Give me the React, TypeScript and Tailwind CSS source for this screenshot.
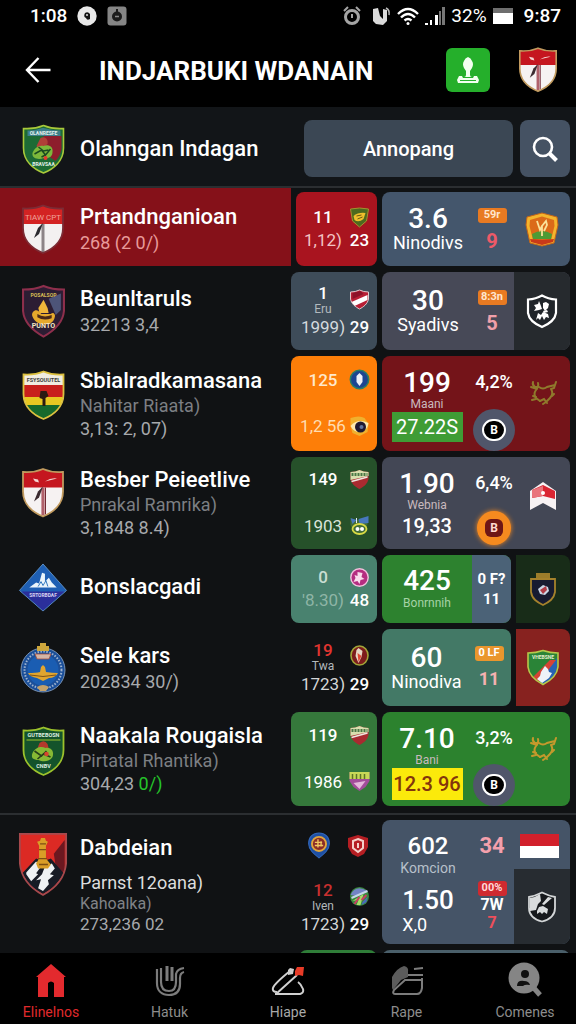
import type { ReactNode } from "react";

const SHIELD = "M22 1.5C16 4 9 5 2 4.5V24C2 37 12 45 22 49C32 45 42 37 42 24V4.5C35 5 28 4 22 1.5Z";

type IconProps = { className?: string };

/* ---------- club crests ---------- */

function CrestGreen({ className = "" }: IconProps) {
  return (
    <svg viewBox="0 0 44 50" className={className} aria-hidden="true">
      <path d={SHIELD} fill="#1d6b35" stroke="#a9c93a" strokeWidth="1.6" />
      <path d="M22 12L40 12V25C39 30 37 34 34 37L24 30Z" fill="#8d1d2c" />
      <path d="M6 6.500C16 6.500 18 4 22 4C27 5 32 6.500 39 6.500V12H6Z" fill="#3d7f8a" />
      <text x="22" y="10.500" fontSize="5" fontWeight="700" textAnchor="middle" fill="#e6f2ee">OLANRESFE</text>
      <path d="M19 14c4-2 8 1 7 6l-8 6-3-4z" fill="#b04038" />
      <path d="M11 29c2-5 6-8 11-7 5-2 10 1 9 6 0 5-4 7-9 6-4 2-12 1-11-5z" fill="#7db83b" />
      <path d="M13 30l7-4 4 5 5-6M17 23l5 4 5-1M20 33l4-2" stroke="#1a4a20" strokeWidth="1.500" fill="none" />
      <circle cx="24" cy="34" r="2" fill="#e23b2d" />
      <text x="22" y="42" fontSize="5" fontWeight="700" textAnchor="middle" fill="#e6f2ee">BRAVSAA</text>
    </svg>
  );
}

function CrestFrog({ className = "" }: IconProps) {
  return (
    <svg viewBox="0 0 44 50" className={className} aria-hidden="true">
      <path d={SHIELD} fill="#14532b" stroke="#9cc22c" strokeWidth="1.800" />
      <text x="22" y="11" fontSize="5.500" fontWeight="700" textAnchor="middle" fill="#dfeee0">GUTBEBOSN</text>
      <path d="M5 14H39" stroke="#9cc22c" strokeWidth="1" />
      <path d="M18 17q5-4 8 1l2 7H15z" fill="#b5392c" />
      <path d="M11 27c3-6 9-7 13-5 6-1 9 4 7 9-3 5-10 5-14 3-5 0-8-2-6-7z" fill="#86b934" />
      <path d="M13 25l7 5 5-5M16 33l6-5 7 3" stroke="#27401a" strokeWidth="1.600" fill="none" />
      <circle cx="25" cy="28" r="2.300" fill="#d5452e" />
      <text x="22" y="42" fontSize="5.500" fontWeight="700" textAnchor="middle" fill="#dfeee0">CNBV</text>
    </svg>
  );
}

function CrestRedWhite({ className = "" }: IconProps) {
  return (
    <svg viewBox="0 0 44 50" className={className} aria-hidden="true">
      <path d={SHIELD} fill="#f6f2f2" />
      <path d="M22 1.500C16 4 9 5 2 4.500V20H42V4.500C35 5 28 4 22 1.500Z" fill="#c5161f" />
      <path d="M22 20V48" stroke="#b0606a" strokeWidth="3.200" />
      <path d="M24.500 20V47" stroke="#712733" strokeWidth="1" />
      <path d="M22 19L17 24L13 34L18 30Z" fill="#3b2b30" />
      <path d="M12 11l5 1 1 3-4-1zM24 14q6-4 12-3l-8 2z" fill="#f5d5d2" />
      <path d={SHIELD} fill="none" stroke="#c19a5e" strokeWidth="1.800" />
    </svg>
  );
}

function CrestRedWhiteText({ className = "" }: IconProps) {
  return (
    <svg viewBox="0 0 44 50" className={className} aria-hidden="true">
      <path d={SHIELD} fill="#f3f1f1" />
      <path d="M22 1.500C16 4 9 5 2 4.500V20H42V4.500C35 5 28 4 22 1.500Z" fill="#d32323" />
      <text x="22" y="15.500" fontSize="8" textAnchor="middle" fill="#f0a29a">TIAW CPT</text>
      <path d="M22 20V48" stroke="#8c8487" strokeWidth="3" />
      <path d="M22 19L17 24L13 34L18 30Z" fill="#2b2b30" />
      <path d={SHIELD} fill="none" stroke="#7c2c35" strokeWidth="1.800" />
    </svg>
  );
}

function CrestPurple({ className = "" }: IconProps) {
  return (
    <svg viewBox="0 0 44 52" className={className} aria-hidden="true">
      <path d="M22 1.500C16 4 9 5 2 5V26C3 38 13 46 22 51C31 46 41 38 42 26V5C35 5 28 4 22 1.500Z" fill="#2c1d33" stroke="#8e2f4c" strokeWidth="2" />
      <path d="M27 14L39 9V25L34 30Z" fill="#4d5478" />
      <text x="22" y="12" fontSize="5" fontWeight="700" textAnchor="middle" fill="#d7bd55">POSALSOP</text>
      <path d="M22 15l4 8 1 5H18l-1-5z" fill="#efb63a" />
      <path d="M11 31c-1-4 3-7 6-5l3 3h9c3-3 5 1 4 3-1 5-5 7-10 7s-10-2-12-8z" fill="#e5a92c" />
      <path d="M16 29q6 4 14 1v3q-8 3-14-1z" fill="#4a2a18" />
      <text x="22" y="43" fontSize="7" fontWeight="700" textAnchor="middle" fill="#f4e5c4">PUNTO</text>
    </svg>
  );
}

function CrestTricolor({ className = "" }: IconProps) {
  return (
    <svg viewBox="0 0 44 50" className={className} aria-hidden="true">
      <path d={SHIELD} fill="#f0ece0" />
      <path d="M2 15H42V28H2.500Z" fill="#c81f1c" />
      <path d="M2.500 27H41.500L39 35H5Z" fill="#e8c822" />
      <path d="M5 35H39C35 42 29 46 22 49C15 46 9 42 5 35Z" fill="#17692c" />
      <path d="M19 21h6l2 5-3 2v8h-3v-7l-3-1z" fill="#2a1a12" />
      <text x="22" y="12" fontSize="5.500" fontWeight="700" textAnchor="middle" fill="#3c3c3c">FSYSOUUTEL</text>
      <path d={SHIELD} fill="none" stroke="#dcc03e" strokeWidth="1.800" />
    </svg>
  );
}

function CrestDiamond({ className = "" }: IconProps) {
  return (
    <svg viewBox="0 0 50 50" className={className} aria-hidden="true">
      <path d="M25 1L49 28L25 49L1 28Z" fill="#1e5fb4" stroke="#5d8fc4" strokeWidth="1" />
      <path d="M3 29H47L25 48.500Z" fill="#2b2f9b" />
      <path d="M11 25l7-5 3 1 3-11 3 1v8l4-4 3 5 5 5z" fill="#eaf4fb" />
      <path d="M20 24l3-5 2 4 3-5 2 6" stroke="#2e76bd" fill="none" strokeWidth="1" />
      <text x="25" y="34.500" fontSize="5" fontWeight="700" textAnchor="middle" fill="#d8d5f3">SRTORBDAF</text>
    </svg>
  );
}

function CrestRound({ className = "" }: IconProps) {
  return (
    <svg viewBox="0 0 46 52" className={className} aria-hidden="true">
      <circle cx="23" cy="28" r="22" fill="#1b4f99" stroke="#7892b4" strokeWidth="1" />
      <circle cx="23" cy="28" r="18.500" fill="none" stroke="#9fb3cf" strokeWidth="2" strokeDasharray="1.500 1.500" />
      <circle cx="23" cy="28" r="15.500" fill="#1a5db2" />
      <path d="M20 1h6v3h3v5H17V4h3z" fill="#cda63c" />
      <path d="M15 12h16l-2 5H17z" fill="#d4b5a6" stroke="#a34e3c" strokeWidth="0.800" />
      <path d="M8 31q8 0 12-1l1-5 2-2 2 2 1 5q6 1 12 1-3 5-9 5l-6 3-6-3q-7-1-9-5z" fill="#e0a52f" />
      <path d="M10 33q13 3 26 0" stroke="#7d5319" fill="none" />
      <path d="M17 45q6-4 12 0l-3 4h-6z" fill="#c5a26a" />
    </svg>
  );
}

function CrestMountain({ className = "" }: IconProps) {
  return (
    <svg viewBox="0 0 50 66" className={className} aria-hidden="true">
      <path d="M1.500 2H48.500V32C47 48 36 58 25 64C14 58 3 48 1.500 32Z" fill="#dc2a24" />
      <path d="M36 22L47 8V38L40 50Z" fill="#6b1820" />
      <path d="M4 42L18 27L25 30L33 27L46 42C40 53 33 59 25 63C17 59 9 53 4 42Z" fill="#171b25" />
      <path d="M8 41l10-11 5 5-5 7 2 1-7 7-5-7zM27 35l7-3 3 5-5 6 4 1-6 5 1 4-6 7-5-3 3-9-5 1 6-6z" fill="#eef1f3" />
      <path d="M22 9l1-3h4l1 3 2 1-2 4v13l5 6-3 4H20l-2-5 3-5V14l-2-4z" fill="#d99d27" />
      <path d="M21 18h7M20 27h9M22 12h6M21 33h9" stroke="#7d4e13" strokeWidth="1.300" />
      <path d="M1.500 2H48.500V32C47 48 36 58 25 64C14 58 3 48 1.500 32Z" fill="none" stroke="#a6494d" strokeWidth="1.800" />
    </svg>
  );
}

function CrestOrange({ className = "" }: IconProps) {
  return (
    <svg viewBox="0 0 34 35" className={className} aria-hidden="true">
      <path d="M17 1L32 5L33 13L29 31L17 34L5 31L1 13L2 5Z" fill="#f4b52d" stroke="#c56518" strokeWidth="1" />
      <path d="M17 4.500L29 8L29.500 14L26 28H8L4.500 14L5 8Z" fill="#db6a19" />
      <path d="M7 22q10-6 20 0l-1 5H8z" fill="#4c9b35" />
      <path d="M12 9l3 9 2-4v10M17 14l4-5 1 4-3 6" stroke="#fae29a" strokeWidth="1.800" fill="none" />
      <path d="M5 27l12 1 12-1-1 3-11 3-11-3z" fill="#c83919" />
    </svg>
  );
}

function CrestOutline({ className = "" }: IconProps) {
  return (
    <svg viewBox="0 0 32 36" className={className} aria-hidden="true">
      <path d="M16 2.500Q10 6 2 6.500V20C3 27 9 31 16 34C23 31 29 27 30 20V6.500Q22 6 16 2.500Z" fill="#20252a" stroke="#fff" strokeWidth="2.200" />
      <path d="M8 12l4-1 1-3 2 5 1 3-3 1-5 1 2-3zM17 10l3-1 3 2-1 4-3 3-2-3z" fill="#fff" />
      <path d="M10 27l2-7 3 2 2-3 5 2 1 4-3-1-2 3-2-4-2 4-2-2z" fill="#fff" />
      <path d="M17 18l4-1 1 2-4 1z" fill="#fff" />
    </svg>
  );
}

function CrestDragon({ className = "" }: IconProps) {
  return (
    <svg viewBox="0 0 28 26" className={className} fill="none" stroke="currentColor" strokeWidth="2" strokeLinecap="round" aria-hidden="true">
      <path d="M4 2q-1 3 2 5h3M2 7l6 2M9 3q1 3-2 7-3 4 0 8l4 3" />
      <path d="M10 7q4 3 8 0l8-2M27 2l-2 6-3 1M22 9q3 5-1 9l-4 4M4 16l3 1M3 20l4-1M11 21l4-2 3 4M14 24l3-2M23 16l2-2" />
    </svg>
  );
}

function CrestArrow({ className = "" }: IconProps) {
  return (
    <svg viewBox="0 0 28 30" className={className} aria-hidden="true">
      <path d="M14 1L27 10V29L14 22L1 29V10Z" fill="#f7f2f3" />
      <path d="M3 9L14 4L26 10V18L14 15L3 17Z" fill="#da2532" />
      <path d="M3 9L14 5V15L3 17Z" fill="#e9747b" />
      <circle cx="14" cy="12" r="2" fill="#fff" />
    </svg>
  );
}

function CrestNavy({ className = "" }: IconProps) {
  return (
    <svg viewBox="0 0 28 34" className={className} aria-hidden="true">
      <path d="M7 1h14v7H7z" fill="#9c7d2a" />
      <path d="M2 7H26V20C25 27 20 30 14 33C8 30 3 27 2 20Z" fill="#171b31" stroke="#a5822c" strokeWidth="1.800" />
      <path d="M9 17l5-4 5 2 1 4-4 4-5-1z" fill="#cbd6e6" />
      <path d="M11 18l6-4 1 4-4 4z" fill="#b03c46" />
    </svg>
  );
}

function CrestSplit({ className = "" }: IconProps) {
  return (
    <svg viewBox="0 0 34 37" className={className} aria-hidden="true">
      <path d="M17 1.500Q10 4 2 4V18C3 27 10 32 17 35.500C24 32 31 27 32 18V4Q24 4 17 1.500Z" fill="#2a8437" />
      <path d="M31 9V19C30 27 24 32 17 35L12 31Z" fill="#2763b3" />
      <path d="M24 11H30L13 33L7 28Z" fill="#d64435" />
      <path d="M15 23l4-6 3 3 1 3 3 1-3 5-7 5-5-4 3-3z" fill="#eef3f8" />
      <text x="17" y="9.500" fontSize="5" fontWeight="700" textAnchor="middle" fill="#e3efcf">VHEBSNE</text>
      <path d="M17 1.500Q10 4 2 4V18C3 27 10 32 17 35.500C24 32 31 27 32 18V4Q24 4 17 1.500Z" fill="none" stroke="#b7c84a" strokeWidth="1.600" />
    </svg>
  );
}

function CrestBall({ className = "" }: IconProps) {
  return (
    <svg viewBox="0 0 30 32" className={className} aria-hidden="true">
      <path d="M15 1.500Q8 5 2 6V17C2 25 9 29 15 30.500C21 29 28 25 28 17V6Q22 5 15 1.500Z" fill="#16191c" stroke="#d3d6d7" strokeWidth="1.800" />
      <path d="M3 7q6-1 10-4l1 7-3 3-2 6-6 1zM25 7l-4-1-6 7 2 1z" fill="#d9dcdd" />
      <path d="M10 20l2-4 4-1 5 3-1 5-3-2-2 2-2-2-3 2z" fill="#d9dcdd" />
    </svg>
  );
}

/* ---------- small badges ---------- */

function Mini({ kind }: { kind: string }) {
  const cls = "size-[21px]";
  const half = "M10 1Q6 3 1 3V10C2 15 6 18 10 20C14 18 18 15 19 10V3Q14 3 10 1Z";
  switch (kind) {
    case "olive":
      return (
        <svg viewBox="0 0 20 21" className={cls} aria-hidden="true">
          <path d="M1 2Q10 0 19 2L17 14L10 20L3 14Z" fill="#4d6a1e" stroke="#a3932d" />
          <path d="M4 9q5-4 12-3l-2 6q-5 4-9 1z" fill="#f0c02c" />
          <path d="M7 9l5-1M8 12l5-2" stroke="#6b5a12" />
        </svg>
      );
    case "slash":
      return (
        <svg viewBox="0 0 20 21" className={cls} aria-hidden="true">
          <path d={half} fill="#b81f35" />
          <path d="M2 13L18 6V11L5 17Z" fill="#fff" />
          <path d="M3 4L11 2L14 5L3 10Z" fill="#8c1228" />
          <path d={half} fill="none" stroke="#dfc8cc" />
        </svg>
      );
    case "blue":
      return (
        <svg viewBox="0 0 20 21" className={cls} aria-hidden="true">
          <circle cx="10" cy="10.500" r="9.200" fill="#1d4591" stroke="#2b8064" strokeWidth="1.500" />
          <path d="M10 4l3 3v6l-3 4-3-4V7z" fill="#edf1f7" />
        </svg>
      );
    case "eye":
      return (
        <svg viewBox="0 0 20 21" className={cls} aria-hidden="true">
          <path d="M1 2q9-3 14 0l4 6-1 8-8 4-7-3-2-7z" fill="#f0b12e" />
          <path d="M1 10q7-8 18-3-1 8-9 9-6 0-9-6z" fill="#fbe9b0" />
          <circle cx="11" cy="11" r="5.500" fill="#1e1931" />
          <circle cx="12" cy="11" r="2" fill="#62759c" />
        </svg>
      );
    case "band":
      return (
        <svg viewBox="0 0 20 21" className={cls} aria-hidden="true">
          <path d={half} fill="#a92a30" />
          <path d="M10 1Q6 3 1 3V11L19 7V3Q14 3 10 1Z" fill="#d9dfae" />
          <path d="M2 5.500H18" stroke="#4a7846" strokeWidth="3" strokeDasharray="2 1" />
          <path d="M2 12.500L18 8" stroke="#efe7df" strokeWidth="1.500" />
        </svg>
      );
    case "flags":
      return (
        <svg viewBox="0 0 20 21" className={cls} aria-hidden="true">
          <path d="M1 4l8 1 9-2v6l-3 9-5 2-6-3-3-7z" fill="#426c3a" />
          <path d="M9 4l10-3v7l-9 1zM1 3l6 2-4 4z" fill="#4777bd" />
          <path d="M7 3v5" stroke="#e9eef5" />
          <ellipse cx="10" cy="14" rx="7" ry="5" fill="none" stroke="#d8da45" strokeWidth="1.800" />
          <circle cx="8" cy="14" r="2" fill="#fff" /><circle cx="12.500" cy="14" r="2" fill="#fff" />
        </svg>
      );
    case "pink":
      return (
        <svg viewBox="0 0 20 21" className={cls} aria-hidden="true">
          <circle cx="10" cy="10.500" r="8.700" fill="#b52d80" stroke="#f2c3de" strokeWidth="1.400" />
          <path d="M8 5l5 1-1 4 3 2-4 1-1 4-2-3-4 1 2-4-1-3 3 1z" fill="#f9dceb" />
        </svg>
      );
    case "ring":
      return (
        <svg viewBox="0 0 20 21" className={cls} aria-hidden="true">
          <ellipse cx="10" cy="10.500" rx="8.500" ry="9.500" fill="#7d1c1c" stroke="#a2a438" strokeWidth="1.600" />
          <path d="M9 3l4 3-1 6-3 6-3-7 1-6z" fill="#e8d8c6" />
          <path d="M8 8l4 3-3 6z" fill="#e14630" />
        </svg>
      );
    case "purple":
      return (
        <svg viewBox="0 0 20 21" className={cls} aria-hidden="true">
          <path d="M0 1H20V10L16 16L10 20L4 16L0 10Z" fill="#a34c9b" />
          <path d="M0 1H20V8H0Z" fill="#c8d857" />
          <path d="M3 3v5M7 3v5M11 3v5M15 3v5" stroke="#5e7325" strokeWidth="1.500" />
          <path d="M4 12l12-2-6 8z" fill="#e5b7dc" />
        </svg>
      );
    case "bluedrop":
      return (
        <svg viewBox="0 0 22 26" className="h-[27px] w-6" aria-hidden="true">
          <path d="M11 1C17 1 21 5 21 11C21 17 16 21 11 25C6 21 1 17 1 11C1 5 5 1 11 1Z" fill="#1e4fa3" stroke="#3166b8" />
          <circle cx="11" cy="11.500" r="6.800" fill="#8a2c28" stroke="#e2a53b" strokeWidth="1.800" />
          <path d="M7 10h7M7 13h8M10 7v8M13 9v5" stroke="#f1c860" strokeWidth="1.300" fill="none" />
        </svg>
      );
    case "redring":
      return (
        <svg viewBox="0 0 22 24" className="h-6 w-[22px]" aria-hidden="true">
          <path d="M11 1L21 4V13L17 20L11 23L5 20L1 13V4Z" fill="#b51e23" />
          <path d="M11 5L16 7V14L11 18L6 14V7Z" fill="#b51e23" stroke="#f3d2cb" strokeWidth="2" />
          <path d="M11 9v5" stroke="#f3d2cb" strokeWidth="2" />
        </svg>
      );
    default:
      return (
        <svg viewBox="0 0 20 21" className={cls} aria-hidden="true">
          <circle cx="10" cy="10.500" r="9.500" fill="#39883e" />
          <path d="M1 9Q6-2 18 5L7 10Z" fill="#7384c5" />
          <path d="M2 12L18 5" stroke="#c7d5e9" strokeWidth="2" />
          <path d="M3 15L14 8L11 19L7 19L9 14Z" fill="#a8dc6a" />
          <path d="M5 18L10 11M12 14L17 9" stroke="#cc3d63" strokeWidth="2" />
          <path d="M13 16l5-5-1 5-5 3z" fill="#4969bd" />
        </svg>
      );
  }
}

function Seal() {
  return (
    <span className="flex size-[42px] items-center justify-center rounded-full bg-[#50566a]">
      <span className="flex h-[22px] w-6 items-center justify-center rounded-full border-2 border-white bg-black text-xs font-bold">B</span>
    </span>
  );
}

function Tag({ children, className }: { children: ReactNode; className: string }) {
  return <span className={`flex h-[15px] w-[29px] items-center justify-center rounded-[3px] text-[11px] font-bold ${className}`}>{children}</span>;
}

/* ---------- row parts ---------- */

type ClubProps = { crest: ReactNode; name: string; place?: string; score?: ReactNode; className?: string };

function Club({ crest, name, place, score, className = "" }: ClubProps) {
  return (
    <div className={`flex min-w-0 flex-1 gap-[14px] pl-5 ${className}`}>
      <div className="flex w-[46px] shrink-0 justify-center">{crest}</div>
      <div className="min-w-0 self-center whitespace-nowrap">
        <h2 className="text-[22px] leading-7 font-medium">{name}</h2>
        {place && <p className="text-lg leading-[22px] text-[#7c7f83]">{place}</p>}
        {score && <p className="text-lg leading-6 text-[#a7a9ac]">{score}</p>}
      </div>
    </div>
  );
}

type StatProps = { top: string; note?: string; bottom: string; icon: string; last: ReactNode; className: string; topClass?: string; bottomClass?: string };

function Stat({ top, note, bottom, icon, last, className, topClass = "", bottomClass = "" }: StatProps) {
  return (
    <div className={`grid shrink-0 grid-cols-[48px_21px] content-center items-center justify-end justify-items-center gap-x-[2px] rounded-lg pr-[7px] text-[17px] whitespace-nowrap ${className}`}>
      <span className={`flex flex-col items-center leading-5 font-medium ${topClass}`}>
        {top}
        {note && <small className="text-xs leading-3 font-normal text-[#b3b9bd]">{note}</small>}
      </span>
      <Mini kind={icon} />
      <span className={`leading-6 ${bottomClass}`}>{bottom}</span>
      <span className="leading-6 font-medium">{last}</span>
    </div>
  );
}

type RateProps = { value: string; note: string; total: ReactNode; change: string; seal: ReactNode; mark: ReactNode; className: string };

function Rate({ value, note, total, change, seal, mark, className }: RateProps) {
  return (
    <div className={`flex w-[188px] shrink-0 rounded-lg ${className}`}>
      <div className="flex flex-1 flex-col items-center pt-3">
        <strong className="text-[28px] leading-[30px] font-medium">{value}</strong>
        <small className="text-xs leading-3 text-[#c9b9be]">{note}</small>
        {total}
      </div>
      <div className="flex w-[44px] flex-col items-center justify-between pt-[14px]">
        <span className="text-lg leading-6 font-medium whitespace-nowrap">{change}</span>
        {seal}
      </div>
      <div className="flex w-[54px] justify-center pt-6">{mark}</div>
    </div>
  );
}

function Figure({ value, label, className = "" }: { value: string; label: string; className?: string }) {
  return (
    <div className={`flex flex-1 flex-col items-center justify-center pl-1 whitespace-nowrap ${className}`}>
      <strong className="text-[28px] leading-7 font-medium">{value}</strong>
      <span className="text-lg leading-5">{label}</span>
    </div>
  );
}

function Side({ children, className = "" }: { children: ReactNode; className?: string }) {
  return <div className={`flex w-[44px] flex-col items-center justify-center gap-2 ${className}`}>{children}</div>;
}

const ROW = "flex gap-[5px] pr-[6px]";

/* ---------- navigation ---------- */

function NavItem({ label, icon, className = "" }: { label: string; icon: ReactNode; className?: string }) {
  return (
    <a href="#" className={`flex w-[62px] flex-col items-center gap-1 text-sm leading-5 ${className}`}>
      {icon}
      {label}
    </a>
  );
}

export default function App() {
  return (
    <div className="flex h-screen flex-col overflow-hidden bg-black font-['Roboto',sans-serif] text-white">
      <div className="flex h-8 shrink-0 items-center justify-between pr-[15px] pl-[30px] text-[19px] font-medium">
        <div className="flex items-center gap-[10px]">
          <span>1:08</span>
          <svg viewBox="0 0 20 20" className="size-5" aria-hidden="true">
            <circle cx="10" cy="10" r="9.700" fill="#e8e8e8" />
            <path d="M8 7q3-2 5 1v5q-3 2-4-1-3-1-1-5z" fill="#111" /><circle cx="10" cy="9" r="1" fill="#ddd" />
          </svg>
          <svg viewBox="0 0 20 20" className="size-5" aria-hidden="true">
            <rect x="0.500" y="0.500" width="19" height="19" rx="3" fill="#858585" />
            <circle cx="10" cy="10.500" r="5" fill="#1b1b1b" /><path d="M10 3v4" stroke="#1b1b1b" strokeWidth="2" /><path d="M8 10.500h4" stroke="#888" strokeWidth="1.500" />
          </svg>
        </div>
        <div className="flex items-center gap-[6px]">
          <svg viewBox="0 0 18 20" className="h-5 w-[18px]" fill="none" stroke="#a5a5a5" aria-hidden="true">
            <circle cx="9" cy="11" r="6.500" strokeWidth="3" /><path d="M9 8v4" strokeWidth="2" /><path d="M1 5l4-4M17 5l-4-4" strokeWidth="2" />
          </svg>
          <svg viewBox="0 0 20 20" className="ml-1 size-5" aria-hidden="true">
            <path d="M2 3l5-1 2 8 3 3V3l4 1v11l-4 4-7-1-3-3z" fill="#dadada" /><path d="M15 2q4 2 3 7" stroke="#bbb" strokeWidth="1.500" fill="none" />
          </svg>
          <svg viewBox="0 0 22 20" className="h-5 w-[22px]" fill="none" stroke="#fff" strokeWidth="2.400" aria-hidden="true">
            <path d="M1 8Q11-2 21 8M4 11.500q7-7 14 0M7.500 14.500q3.500-3 7 0" /><circle cx="11" cy="17.500" r="1.500" fill="#fff" stroke="none" />
          </svg>
          <svg viewBox="0 0 20 20" className="size-5" aria-hidden="true">
            <path d="M0 17h3v2H0zM5 14h2v5H5zM10 9h3v10h-3z" fill="#fff" /><path d="M14 5h2v14h-2zM17 1h3v18h-3z" fill="#777" />
          </svg>
          <span className="font-normal">32%</span>
          <svg viewBox="0 0 20 16" className="h-4 w-5" aria-hidden="true">
            <path d="M0 0h20v5H0z" fill="#6e6e6e" /><path d="M0 5h20v11H0z" fill="#fff" />
          </svg>
          <span className="ml-[5px]">9:87</span>
        </div>
      </div>

      <header className="flex h-[75px] shrink-0 items-center pr-[18px] pl-[25px]">
        <button type="button" aria-label="Back" className="flex w-[74px]">
          <svg viewBox="0 0 26 26" className="size-[26px]" fill="none" stroke="#fff" strokeWidth="2.400" aria-hidden="true">
            <path d="M25.500 13H2M13.500 1L2 13L13.500 25" />
          </svg>
        </button>
        <h1 className="flex-1 pt-1 text-[26px] font-bold whitespace-nowrap">INDJARBUKI WDANAIN</h1>
        <button type="button" aria-label="Stamp" className="mr-7 flex size-11 items-center justify-center rounded-md bg-[#25af2b]">
          <svg viewBox="0 0 22 26" className="h-[26px] w-[22px]" fill="#f2fff0" aria-hidden="true">
            <path d="M11 0q3 1 4 4 2 3 0 7l-2 3v4q0 2 2 2H7q2 0 2-2v-4l-2-3Q5 7 7 4q1-3 4-4z" />
            <path d="M2 19h3l1 2h10l1-2h3l2 4-1 3H1l-1-3z" /><path d="M3 23.500h16" stroke="#25af2b" />
          </svg>
        </button>
        <CrestRedWhite className="h-[47px] w-[40px]" />
      </header>

      <main className="min-h-0 flex-1 overflow-hidden bg-[#101214]">
        <section className="flex h-[79px] items-center gap-[7px] bg-[#121518] pt-1 pr-[6px]">
          <Club crest={<CrestGreen className="h-[50px] w-[45px]" />} name="Olahngan Indagan" />
          <button type="button" className="h-[57px] w-[209px] rounded-lg bg-[#3b4754] text-xl font-medium">Annopang</button>
          <button type="button" aria-label="Search" className="flex h-[57px] w-[50px] items-center justify-center rounded-lg bg-[#455263]">
            <svg viewBox="0 0 26 26" className="size-[26px]" fill="none" stroke="#fff" aria-hidden="true">
              <circle cx="11" cy="11" r="9" strokeWidth="2.600" /><path d="M17.500 17.500L24.500 24.500" strokeWidth="4" />
            </svg>
          </button>
        </section>

        <section className="flex flex-col gap-[6px] border-t-2 border-[#2b2e31] pb-[7px]">
          <div className="flex min-h-[78px] gap-[5px] pr-[6px]">
            <Club
              className="items-center bg-[#851119] pt-1"
              crest={<CrestRedWhiteText className="h-[50px] w-[44px]" />}
              name="Prtandnganioan"
              score={<span className="text-[#e89a9a]">268 (2 0/)</span>}
            />
            <Stat className="mt-1 w-[81px] bg-[#a9141f]" top="11" bottom="1,12)" icon="olive" last="23" bottomClass="text-[#f3c4c4]" />
            <div className="mt-1 flex w-[188px] shrink-0 rounded-lg bg-[#44566c]">
              <Figure value="3.6" label="Ninodivs" />
              <Side>
                <Tag className="bg-[#e87a22] text-[#ffe6cf]">59r</Tag>
                <b className="text-xl leading-5 text-[#ee5a68]">9</b>
              </Side>
              <div className="flex w-14 items-center justify-center"><CrestOrange className="h-[35px] w-[34px]" /></div>
            </div>
          </div>

          <div className={`${ROW} min-h-[78px]`}>
            <Club className="items-center" crest={<CrestPurple className="h-[54px] w-[45px]" />} name="Beunltaruls" score="32213 3,4" />
            <Stat className="w-[86px] bg-[#3e4c59]" top="1" note="Eru" bottom="1999)" icon="slash" last="29" bottomClass="text-[#d4dade]" />
            <div className="flex w-[188px] shrink-0 overflow-hidden rounded-lg bg-[#474957]">
              <Figure value="30" label="Syadivs" />
              <Side>
                <Tag className="bg-[#e87a22] text-[#ffe6cf]">8:3n</Tag>
                <b className="text-xl leading-5 text-[#f0a0aa]">5</b>
              </Side>
              <div className="flex w-14 items-center justify-center bg-[#262a2e]"><CrestOutline className="h-9 w-8" /></div>
            </div>
          </div>

          <div className={`${ROW} min-h-[95px]`}>
            <Club crest={<CrestTricolor className="mt-[14px] h-[50px] w-[45px]" />} name="Sbialradkamasana" place="Nahitar Riaata)" score="3,13: 2, 07)" />
            <Stat className="w-[86px] gap-y-6 bg-[#fd7e08]" top="125" bottom="1,2 56" icon="blue" last={<Mini kind="eye" />} topClass="text-[#ffe9cb]" bottomClass="text-[#ffdcb0]" />
            <Rate
              className="bg-[#741419]"
              value="199"
              note="Maani"
              total={<span className="mt-[2px] w-[71px] bg-[#3f9c35] text-center text-xl leading-[30px]">27.22S</span>}
              change="4,2%"
              seal={<Seal />}
              mark={<CrestDragon className="h-[26px] w-[28px] text-[#8f7a2c]" />}
            />
          </div>

          <div className={`${ROW} min-h-[92px]`}>
            <Club crest={<CrestRedWhite className="mt-[10px] h-[51px] w-[44px]" />} name="Besber Peieetlive" place="Pnrakal Ramrika)" score="3,1848 8.4)" />
            <Stat className="w-[86px] gap-y-6 bg-[#26512a]" top="149" bottom="1903" icon="band" last={<Mini kind="flags" />} bottomClass="text-[#d9e4d9]" />
            <Rate
              className="bg-[#434755]"
              value="1.90"
              note="Webnia"
              total={<span className="text-xl leading-[30px] font-medium">19,33</span>}
              change="6,4%"
              seal={
                <span className="mb-1 flex size-[34px] items-center justify-center rounded-full bg-[#f58a1f] shadow-[0_0_5px_#f58a1f]">
                  <span className="flex size-[18px] items-center justify-center rounded-md bg-[#6d1616] text-xs leading-3 font-bold text-[#ffd9cf]">B</span>
                </span>
              }
              mark={<CrestArrow className="h-[30px] w-7" />}
            />
          </div>

          <div className={`${ROW} min-h-[68px]`}>
            <Club className="items-center pb-1" crest={<CrestDiamond className="h-[49px] w-[50px] shrink-0" />} name="Bonslacgadi" />
            <Stat className="w-[86px] bg-[#49826f]" top="0" bottom="'8.30)" icon="pink" last="48" topClass="text-[#c9ded2]" bottomClass="text-[#8fb5a6]" />
            <div className="flex w-[129px] shrink-0 overflow-hidden rounded-lg bg-[#2d822f]">
              <div className="flex flex-1 flex-col items-center justify-center">
                <strong className="text-[28px] leading-7 font-medium">425</strong>
                <small className="text-xs leading-4 text-[#a5d3a6]">Bonrnnih</small>
              </div>
              <div className="flex w-[39px] flex-col items-center justify-center bg-[#4b6277] text-[15px] leading-5 font-bold">
                <span>0 F?</span>
                <span>11</span>
              </div>
            </div>
            <div className="flex w-[54px] items-center justify-center rounded-r-lg bg-[#182c18]"><CrestNavy className="h-[34px] w-7" /></div>
          </div>

          <div className={`${ROW} min-h-[77px]`}>
            <Club className="items-center" crest={<CrestRound className="h-[52px] w-[46px]" />} name="Sele kars" score="202834 30/)" />
            <Stat className="w-[86px]" top="19" note="Twa" bottom="1723)" icon="ring" last="29" topClass="font-bold text-[#e23530]" bottomClass="text-[#d5d7d8]" />
            <div className="flex w-[129px] shrink-0 rounded-lg bg-[#437966]">
              <Figure value="60" label="Ninodiva" />
              <Side>
                <Tag className="bg-[#ea962d] text-white">0 LF</Tag>
                <b className="text-lg leading-5 text-[#f4b1b1]">11</b>
              </Side>
            </div>
            <div className="flex w-[54px] items-center justify-center rounded-r-lg bg-[#87221f]"><CrestSplit className="h-[37px] w-[34px]" /></div>
          </div>

          <div className={`${ROW} min-h-[94px]`}>
            <Club
              crest={<CrestFrog className="mt-[14px] h-[50px] w-[45px]" />}
              name="Naakala Rougaisla"
              place="Pirtatal Rhantika)"
              score={<>304,23 <span className="text-[#25c32a]">0/)</span></>}
            />
            <Stat className="w-[86px] gap-y-6 bg-[#35783b]" top="119" bottom="1986" icon="band" last={<Mini kind="purple" />} />
            <Rate
              className="bg-[#2c822e]"
              value="7.10"
              note="Bani"
              total={<span className="mt-[2px] w-[71px] bg-[#fbea0b] text-center text-xl leading-8 font-medium text-[#83350c]">12.3 96</span>}
              change="3,2%"
              seal={<Seal />}
              mark={<CrestDragon className="h-[26px] w-[28px] text-[#c4992c]" />}
            />
          </div>
        </section>

        <section className="flex flex-col gap-[6px] border-t-2 border-[#2b2e31] pt-[5px]">
          <div className={`${ROW} min-h-[124px]`}>
            <div className="flex min-w-0 flex-1 gap-[14px] pl-5">
              <div className="flex w-[46px] shrink-0 justify-center pt-3"><CrestMountain className="h-[65px] w-[50px] shrink-0" /></div>
              <div className="pt-[14px] whitespace-nowrap">
                <h2 className="mb-[10px] text-[22px] leading-7 font-medium">Dabdeian</h2>
                <p className="text-lg leading-[22px] text-[#dcdddd]">Parnst 12oana)</p>
                <p className="text-base leading-5 text-[#808387]">Kahoalka)</p>
                <p className="text-[17px] leading-5 text-[#a7a9ac]">273,236 02</p>
              </div>
            </div>
            <div className="flex w-[86px] shrink-0 flex-col justify-between pt-3 pb-2">
              <div className="flex items-center justify-between pr-2 pl-4">
                <Mini kind="bluedrop" />
                <Mini kind="redring" />
              </div>
              <Stat className="w-[86px]" top="12" note="Iven" bottom="1723)" icon="swirl" last="29" topClass="font-bold text-[#c9302f]" bottomClass="text-[#d5d7d8]" />
            </div>
            <div className="flex w-[188px] shrink-0 overflow-hidden rounded-lg bg-[#455467]">
              <div className="flex flex-1 flex-col items-center justify-between pt-3 pb-2 pl-1">
                <div className="flex flex-col items-center">
                  <strong className="text-2xl leading-7 font-medium">602</strong>
                  <span className="text-sm leading-4 text-[#b7c0ca]">Komcion</span>
                </div>
                <div className="flex flex-col items-start">
                  <strong className="text-[26px] leading-7 font-medium">1.50</strong>
                  <span className="text-lg leading-[22px]">X,0</span>
                </div>
              </div>
              <div className="flex w-[44px] flex-col items-center justify-between pt-3 pb-3">
                <b className="text-[22px] leading-7 text-[#f4a0ac]">34</b>
                <div className="flex flex-col items-center">
                  <Tag className="bg-[#cf2a30] text-[#ffd9d9]">00%</Tag>
                  <span className="text-base leading-[18px] font-bold">7W</span>
                  <b className="text-base leading-[18px] text-[#ee4f5b]">7</b>
                </div>
              </div>
              <div className="flex w-14 flex-col">
                <div className="flex h-[49px] items-center pt-[3px] pl-[6px]">
                  <svg viewBox="0 0 39 24" className="h-6 w-[39px]" aria-hidden="true">
                    <path d="M0 0h39v12H0z" fill="#d2202b" /><path d="M0 12h39v12H0z" fill="#fff" />
                  </svg>
                </div>
                <div className="flex flex-1 items-center justify-center bg-[#272c31]"><CrestBall className="h-8 w-[30px]" /></div>
              </div>
            </div>
          </div>

          <div className={ROW}>
            <div className="flex-1" />
            <div className="h-10 w-[78px] shrink-0 rounded-lg bg-[#2f7d38]" />
            <div className="h-10 w-[188px] shrink-0 rounded-lg bg-[#4a5f6a]" />
          </div>
        </section>
      </main>

      <nav className="flex h-[71px] shrink-0 items-end justify-between bg-black px-5 pb-[2px] text-[#8d8d8d]">
        <NavItem
          label="Elinelnos"
          className="text-[#e02a2c]"
          icon={
            <svg viewBox="0 0 32 34" className="h-[34px] w-8" fill="#e32a2e" aria-hidden="true">
              <path d="M16 0L31 13H29V33H19V19Q16 16 13 19V33H3V13H1Z" />
            </svg>
          }
        />
        <NavItem
          label="Hatuk"
          icon={
            <svg viewBox="0 0 30 34" className="h-[34px] w-[30px]" fill="none" stroke="#7c7c7c" strokeWidth="2.200" aria-hidden="true">
              <path d="M2 5V19C2 27 7 31 14 31C21 31 25 27 25 20V14Q25 9 29 8" />
              <path d="M6 4V18C6 24 9 27 14 27C19 27 21 23 21 18V10Q22 5 29 4" />
              <path d="M12 2V17M17 3V17" strokeWidth="3" />
            </svg>
          }
        />
        <NavItem
          label="Hiape"
          className="text-[#a9a9a9]"
          icon={
            <svg viewBox="0 0 34 34" className="size-[34px]" fill="none" stroke="#d0d0d0" strokeWidth="2" aria-hidden="true">
              <path d="M6 28Q1 28 2 24Q3 20 19 7M5 30L26 11M4 30H29Q33 29 32 25Q30 20 27 18" />
              <path d="M17 6l2-2 4 1-1 5-5 1z" fill="#d0d0d0" stroke="none" /><path d="M26 3h7l-1 9-4-1-4 1v-5z" fill="#e83b27" stroke="none" />
            </svg>
          }
        />
        <NavItem
          label="Rape"
          icon={
            <svg viewBox="0 0 34 34" className="size-[34px]" fill="none" stroke="#7c7c7c" strokeWidth="2" aria-hidden="true">
              <path d="M2 24V13Q7 4 14 2Q19 3 18 8V13L11 16L3 26Z" fill="#5c5c5c" stroke="none" />
              <path d="M24 5L33 4M18 11H33M32 14V24Q31 30 27 30H5Q2 30 4 26L15 16H32" />
            </svg>
          }
        />
        <NavItem
          label="Comenes"
          icon={
            <svg viewBox="0 0 34 36" className="h-9 w-[34px]" aria-hidden="true">
              <path d="M25 25L32 33" stroke="#858585" strokeWidth="5" /><circle cx="16" cy="16" r="15.500" fill="#858585" />
              <circle cx="17" cy="12" r="4" fill="#101010" /><path d="M9 24q0-6 7-5 5 0 6 4-5-1-7 1z" fill="#101010" />
            </svg>
          }
        />
      </nav>
    </div>
  );
}
